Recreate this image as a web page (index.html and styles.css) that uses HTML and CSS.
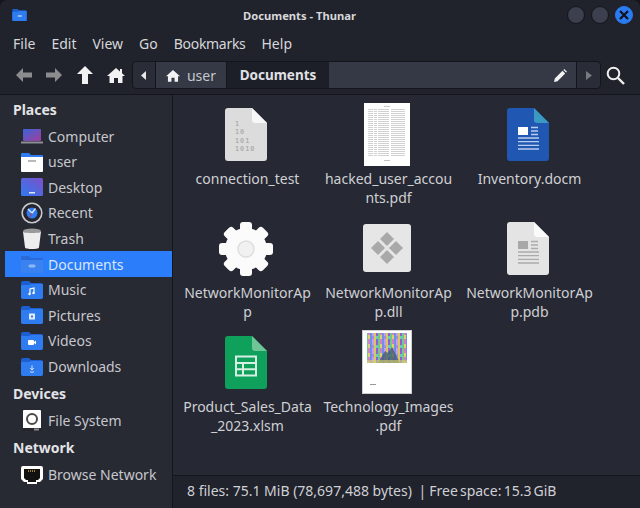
FILE: index.html
```html
<!DOCTYPE html>
<html lang="en">
<head>
  <meta charset="UTF-8">
  <title>Documents - Thunar</title>
  <link rel="stylesheet" href="styles.css">
</head>
<body>

<svg class="defs" width="0" height="0">
  <defs>
    <symbol id="folder" viewBox="0 0 22 18">
      <path d="M0 2a2 2 0 0 1 2-2h6l2 2h10a2 2 0 0 1 2 2v12a2 2 0 0 1-2 2H2a2 2 0 0 1-2-2z" fill="#1c5fd0"/>
      <path d="M0 5a1 1 0 0 1 1-1h7l2-1h11a1 1 0 0 1 1 1v12a2 2 0 0 1-2 2H2a2 2 0 0 1-2-2z" fill="#2f7bf0"/>
    </symbol>
    <symbol id="doc-sheet" viewBox="0 0 42 53">
      <path d="M3 0h24l15 15v35a3 3 0 0 1-3 3H3a3 3 0 0 1-3-3V3a3 3 0 0 1 3-3z"/>
    </symbol>
  </defs>
</svg>

<div class="window">
  <header class="titlebar">
    <svg class="app-icon" width="15" height="12" viewBox="0 0 22 18"><use href="#folder"/><rect x="8" y="9" width="7" height="3" rx="1.5" fill="#8fb8f5"/></svg>
    <div class="title">Documents - Thunar</div>
    <div class="win-buttons">
      <span class="win-btn"></span>
      <span class="win-btn"></span>
      <span class="win-btn close">
        <svg width="10" height="10" viewBox="0 0 10 10"><path d="M1 1l8 8M9 1l-8 8" stroke="#10131a" stroke-width="2.2"/></svg>
      </span>
    </div>
  </header>

  <nav class="menubar">
    <span>File</span><span>Edit</span><span>View</span><span>Go</span><span class="tight">Bookmarks</span><span>Help</span>
  </nav>

  <div class="toolbar">
    <svg class="tool" width="18" height="16" viewBox="0 0 18 16"><path d="M8 1L1 8l7 7v-4.500h9v-5H8z" fill="#8b8c90"/></svg>
    <svg class="tool" width="18" height="16" viewBox="0 0 18 16"><path d="M10 1l7 7-7 7v-4.500H1v-5h9z" fill="#8b8c90"/></svg>
    <svg class="tool up" width="16" height="18" viewBox="0 0 16 18"><path d="M8 0l8 8h-5v10H5V8H0z" fill="#f2f2f2"/></svg>
    <svg class="tool home" width="18" height="16" viewBox="0 0 18 16"><path d="M9 1l4 3.500V2h2v4.300L18 9h-2.500v7H11v-5H7v5H2.500V9H0z" fill="#f2f2f2"/></svg>

    <div class="pathbar">
      <div class="seg arrow-seg"><svg width="6" height="9" viewBox="0 0 6 9"><path d="M5 0v9L0 4.500z" fill="#e8e8e8"/></svg></div>
      <div class="seg user-seg">
        <svg width="14" height="13" viewBox="0 0 18 16"><path d="M9 1l9 8h-2.500v7H11v-5H7v5H2.500V9H0z" fill="#f2f2f2"/></svg>
        <span>user</span>
      </div>
      <div class="seg current-seg">Documents</div>
      <div class="seg entry-seg">
        <svg width="13" height="13" viewBox="0 0 13 13"><path d="M0 13l.8-3.500L8.500 1.800l2.700 2.700-7.700 7.700zM9.400.9l.9-.9 2.700 2.700-.9.900z" fill="#f2f2f2"/></svg>
      </div>
      <div class="seg arrow-seg end"><svg width="6" height="9" viewBox="0 0 6 9"><path d="M0 0v9l6-4.500z" fill="#777983"/></svg></div>
    </div>

    <svg class="search" width="19" height="19" viewBox="0 0 19 19"><circle cx="7.500" cy="7.500" r="5.800" fill="none" stroke="#f0f0f0" stroke-width="2"/><path d="M12 12l6 6" stroke="#f0f0f0" stroke-width="2.400"/></svg>
  </div>

  <div class="main">
    <aside class="sidebar">
      <h3>Places</h3>
      <div class="place">
        <svg width="22" height="18" viewBox="0 0 22 18"><defs><linearGradient id="lap" x1="0" y1="0" x2="1" y2="1"><stop offset="0" stop-color="#3b63d8"/><stop offset="1" stop-color="#a13f9c"/></linearGradient></defs><rect x="2" y="2" width="18" height="12" rx="1" fill="url(#lap)"/><rect x="0" y="14.500" width="22" height="2" fill="#8d8f96"/></svg>
        Computer
      </div>
      <div class="place">
        <svg width="22" height="20" viewBox="0 0 22 20"><path d="M0 2a1 1 0 0 1 1-1h7l2 2h11a1 1 0 0 1 1 1v3H0z" fill="#2f7bf0"/><path d="M0 5h22v14a1 1 0 0 1-1 1H1a1 1 0 0 1-1-1z" fill="#fff"/><rect x="7" y="8" width="8" height="2" fill="#b9b9b9"/></svg>
        user
      </div>
      <div class="place">
        <svg width="22" height="18" viewBox="0 0 22 18"><defs><linearGradient id="desk" x1="0" y1="1" x2="1" y2="0"><stop offset="0" stop-color="#2f7bf0"/><stop offset="1" stop-color="#7d50c9"/></linearGradient></defs><rect width="22" height="18" rx="1.500" fill="url(#desk)"/><rect x="8" y="14" width="6" height="1.500" fill="#dfe6f8"/></svg>
        Desktop
      </div>
      <div class="place">
        <svg width="22" height="22" viewBox="0 0 22 22"><circle cx="11" cy="11" r="9.800" fill="#23252f" stroke="#c9c9cc" stroke-width="1.600"/><circle cx="11" cy="11" r="5.500" fill="#2f7bf0"/><path d="M7 7l4 4 3.500-4.500" fill="none" stroke="#dfe9fb" stroke-width="1.300"/><path d="M11 11l-3 5" stroke="#c03a4a"/></svg>
        Recent
      </div>
      <div class="place">
        <svg width="20" height="22" viewBox="0 0 20 22"><ellipse cx="10" cy="3" rx="9" ry="2.500" fill="#9a9a9a"/><path d="M1 3.500c2 2 16 2 18 0l-2 16c-.3 2-13.700 2-14 0z" fill="#ededed"/></svg>
        Trash
      </div>
      <div class="place selected">
        <svg width="22" height="18" viewBox="0 0 22 18"><path d="M0 2a1 1 0 0 1 1-1h7l2 2h11a1 1 0 0 1 1 1v13a1 1 0 0 1-1 1H1a1 1 0 0 1-1-1z" fill="#2a6ad8"/><path d="M0 5h22v12a1 1 0 0 1-1 1H1a1 1 0 0 1-1-1z" fill="#3a82f0"/><rect x="7.500" y="9.500" width="7" height="3" rx="1.500" fill="#8fb8f5"/></svg>
        Documents
      </div>
      <div class="place">
        <svg width="22" height="18" viewBox="0 0 22 18"><use href="#folder"/><path d="M9 13V8l4-1v5" fill="none" stroke="#fff" stroke-width="1.200"/><circle cx="8.500" cy="13" r="1.200" fill="#fff"/><circle cx="12.500" cy="12" r="1.200" fill="#fff"/></svg>
        Music
      </div>
      <div class="place">
        <svg width="22" height="18" viewBox="0 0 22 18"><use href="#folder"/><rect x="8" y="7.500" width="6" height="6" fill="#e4ecfb"/><rect x="10" y="9.500" width="2" height="2" fill="#2f7bf0"/></svg>
        Pictures
      </div>
      <div class="place">
        <svg width="22" height="18" viewBox="0 0 22 18"><use href="#folder"/><rect x="7" y="8" width="6" height="5" rx="1" fill="#fff"/><path d="M13 10l2-1.500v4L13 11z" fill="#fff"/></svg>
        Videos
      </div>
      <div class="place">
        <svg width="22" height="18" viewBox="0 0 22 18"><use href="#folder"/><path d="M11 7.500v4M9.300 10l1.700 2 1.700-2M9 14h4" fill="none" stroke="#d8e5fb" stroke-width="1"/></svg>
        Downloads
      </div>
      <h3>Devices</h3>
      <div class="place">
        <svg width="18" height="21" viewBox="0 0 18 21"><rect width="18" height="19" rx="1" fill="#fff"/><rect y="18" width="18" height="3" fill="#24262c"/><rect x="11" y="18.500" width="5" height="2" fill="#8a8a8a"/><circle cx="9" cy="9" r="5" fill="none" stroke="#4a4a4a" stroke-width="2"/></svg>
        File System
      </div>
      <h3>Network</h3>
      <div class="place">
        <svg width="22" height="18" viewBox="0 0 22 18"><path d="M2 0h18a2 2 0 0 1 2 2v11l-3 3h-3v2H6v-2H3l-3-3V2a2 2 0 0 1 2-2z" fill="#fff"/><path d="M3 3h16v9l-2 2h-2v2H7v-2H5l-2-2z" fill="#111"/><path d="M7 5h8" stroke="#c9a53a" stroke-width="1.500" stroke-dasharray="1 1"/></svg>
        Browse Network
      </div>
    </aside>

    <section class="content">
      <div class="grid">
        <div class="file">
          <div class="thumb">
            <svg width="42" height="53" viewBox="0 0 42 53">
              <use href="#doc-sheet" fill="#dcdcdc"/>
              <path d="M27 0l15 15H30a3 3 0 0 1-3-3z" fill="#f7f7f7"/>
              <text class="bin" x="10" y="18">1</text>
              <text class="bin" x="10" y="26">10</text>
              <text class="bin" x="10" y="35">101</text>
              <text class="bin" x="10" y="43">1010</text>
            </svg>
          </div>
          <div class="name">connection_test</div>
        </div>
        <div class="file">
          <div class="thumb">
            <svg width="46" height="63" viewBox="0 0 46 63">
              <defs>
                <pattern id="rows" width="46" height="2" patternUnits="userSpaceOnUse"><rect width="46" height="1" fill="#9a9a9a"/></pattern>
              </defs>
              <rect width="46" height="63" fill="#fff"/>
              <g opacity=".45">
                <rect x="4" y="6" width="5" height="48" fill="url(#rows)"/>
                <rect x="10" y="6" width="3" height="48" fill="url(#rows)"/>
                <rect x="14" y="6" width="11" height="48" fill="url(#rows)"/>
                <rect x="27" y="6" width="14" height="48" fill="url(#rows)"/>
                <rect x="20" y="57" width="6" height="1" fill="#777"/>
                <rect x="20" y="3" width="6" height="1" fill="#888"/>
              </g>
            </svg>
          </div>
          <div class="name">hacked_user_accou<br>nts.pdf</div>
        </div>
        <div class="file">
          <div class="thumb">
            <svg width="42" height="53" viewBox="0 0 42 53">
              <use href="#doc-sheet" fill="#2057b3"/>
              <path d="M27 0l15 15H30a3 3 0 0 1-3-3z" fill="#3a9ac4"/>
              <rect x="11" y="19" width="10" height="8" fill="#fff"/>
              <path d="M24 19.500h7M24 23h7M24 26.500h7M11 30h21M11 33.700h21M11 37.400h21M11 41h21" stroke="#b9cdf0" stroke-width="1.300"/>
            </svg>
          </div>
          <div class="name">Inventory.docm</div>
        </div>

        <div class="file">
          <div class="thumb">
            <svg class="gear" width="54" height="54" viewBox="-27 -27 54 54">
              <g fill="#fbfbfb">
                <circle r="21"/>
                <rect x="-6" y="-27" width="12" height="12" rx="3"/>
                <rect x="-6" y="-27" width="12" height="12" rx="3" transform="rotate(45)"/>
                <rect x="-6" y="-27" width="12" height="12" rx="3" transform="rotate(90)"/>
                <rect x="-6" y="-27" width="12" height="12" rx="3" transform="rotate(135)"/>
                <rect x="-6" y="-27" width="12" height="12" rx="3" transform="rotate(180)"/>
                <rect x="-6" y="-27" width="12" height="12" rx="3" transform="rotate(225)"/>
                <rect x="-6" y="-27" width="12" height="12" rx="3" transform="rotate(270)"/>
                <rect x="-6" y="-27" width="12" height="12" rx="3" transform="rotate(315)"/>
              </g>
              <circle r="8" fill="#f1f1f1" stroke="#dedede" stroke-width="1.500"/>
            </svg>
          </div>
          <div class="name">NetworkMonitorAp<br>p</div>
        </div>
        <div class="file">
          <div class="thumb">
            <svg width="48" height="48" viewBox="0 0 48 48">
              <rect width="48" height="48" rx="3" fill="#e6e6e6"/>
              <g fill="#a9a9a9">
                <path d="M24 8l7 7-7 7-7-7z"/>
                <path d="M24 26l7 7-7 7-7-7z"/>
                <path d="M15 17l7 7-7 7-7-7z"/>
                <path d="M33 17l7 7-7 7-7-7z"/>
              </g>
            </svg>
          </div>
          <div class="name">NetworkMonitorAp<br>p.dll</div>
        </div>
        <div class="file">
          <div class="thumb">
            <svg width="42" height="53" viewBox="0 0 42 53">
              <use href="#doc-sheet" fill="#e4e4e4"/>
              <path d="M27 0l15 15H30a3 3 0 0 1-3-3z" fill="#fafafa"/>
              <rect x="11" y="19" width="10" height="8" fill="#a8a8a8"/>
              <path d="M24 19.500h7M24 23h7M24 26.500h7M11 30h21M11 33.700h21M11 37.400h21M11 41h21" stroke="#ababab" stroke-width="1.300"/>
            </svg>
          </div>
          <div class="name">NetworkMonitorAp<br>p.pdb</div>
        </div>

        <div class="file">
          <div class="thumb">
            <svg width="42" height="53" viewBox="0 0 42 53">
              <use href="#doc-sheet" fill="#0fa05c"/>
              <path d="M27 0l15 15H30a3 3 0 0 1-3-3z" fill="#6fc498"/>
              <path d="M11 20.500h20v19H11zM11 27h20M11 33.300h20M18 27v12.500" fill="none" stroke="#d8f0e3" stroke-width="2"/>
            </svg>
          </div>
          <div class="name">Product_Sales_Data<br>_2023.xlsm</div>
        </div>
        <div class="file">
          <div class="thumb">
            <svg width="50" height="64" viewBox="0 0 50 64">
              <defs>
                <pattern id="noise" width="12" height="9" patternUnits="userSpaceOnUse">
                  <rect width="12" height="9" fill="#a78be0"/>
                  <rect x="0" width="2" height="9" fill="#d9c65c"/>
                  <rect x="2" width="2" height="6" fill="#8e5fd8"/>
                  <rect x="4" width="2" height="9" fill="#70c98a"/>
                  <rect x="6" width="2" height="5" fill="#d77fc0"/>
                  <rect x="8" width="2" height="9" fill="#6f8fe8"/>
                  <rect x="10" width="2" height="6" fill="#c0a0e8"/>
                  <rect x="2" y="6" width="2" height="3" fill="#66d0c0"/>
                  <rect x="6" y="5" width="2" height="4" fill="#e0d070"/>
                </pattern>
              </defs>
              <rect width="50" height="64" fill="#fff"/>
              <rect x=".5" y=".5" width="49" height="63" fill="none" stroke="#cfcfcf"/>
              <rect x="5" y="3" width="40" height="30" fill="url(#noise)"/>
              <path d="M16 33l7-12 3 2 4-6 8 16z" fill="#3f5a6e" opacity=".75"/>
              <rect x="5" y="30" width="40" height="3" fill="#d8d46a" opacity=".6"/>
              <rect x="8" y="54" width="6" height="1" fill="#999"/>
            </svg>
          </div>
          <div class="name">Technology_Images<br>.pdf</div>
        </div>
      </div>
      <footer class="status">8 files: 75.1 MiB (78,697,488 bytes) <span class="sep">|</span> <span class="free">Free space: 15.3 GiB</span></footer>
    </section>
  </div>
</div>

</body>
</html>
```

FILE: styles.css
```css
html, body {
  margin: 0;
  height: 100%;
  background: #15151b;
}
body {
  font-family: "Noto Sans", sans-serif;
  font-size: 14px;
  color: #d3d4d8;
  overflow: hidden;
}
.defs {
  display: block;
  height: 0;
}
.window {
  width: 640px;
  height: 508px;
  display: flex;
  flex-direction: column;
  background: #20222c;
  border-radius: 7px 7px 0 0;
  overflow: hidden;
}
.titlebar {
  height: 30px;
  flex: none;
  display: grid;
  grid-template-columns: 231px auto 1fr;
  align-items: center;
  padding: 0 7px 0 12px;
}
.app-icon {
  display: block;
}
.title {
  font-size: 11.2px;
  font-weight: 700;
  color: #d8d8da;
}
.win-buttons {
  display: flex;
  justify-content: flex-end;
  align-items: center;
  gap: 6px;
}
.win-btn {
  width: 16px;
  height: 16px;
  border-radius: 50%;
  background: #3c3f4d;
  border: 1px solid #14161c;
  display: flex;
  align-items: center;
  justify-content: center;
}
.win-btn.close {
  background: #2b7bf2;
  border-color: #2b7bf2;
}
.menubar {
  height: 26px;
  flex: none;
  display: flex;
  align-items: center;
  gap: 16px;
  padding: 0 13px;
  color: #d6d7da;
}
.tight {
  letter-spacing: -.3px;
}
.toolbar {
  height: 39px;
  flex: none;
  box-sizing: border-box;
  display: flex;
  align-items: center;
  padding: 5px 8px 5px 15px;
  border-bottom: 1px solid #14161c;
}
.tool {
  flex: none;
  margin-right: 12px;
}
.tool.up {
  margin: 0 14px 0 2px;
}
.tool.home {
  margin-right: 7px;
}
.pathbar {
  flex: 1;
  height: 28px;
  box-sizing: border-box;
  display: flex;
  border: 1px solid #14161c;
  border-radius: 4px;
  background: #2a2c38;
  overflow: hidden;
}
.seg {
  box-sizing: border-box;
  display: flex;
  align-items: center;
  justify-content: center;
  border-right: 1px solid #14161c;
}
.arrow-seg {
  width: 23px;
  flex: none;
}
.arrow-seg.end {
  border-right: 0;
}
.user-seg {
  width: 71px;
  gap: 7px;
  background: #353845;
  color: #c6c7cc;
}
.current-seg {
  width: 102px;
  background: #1d1f28;
  border-right: 0;
  font-size: 13.5px;
  font-weight: 700;
  color: #e0e1e4;
}
.entry-seg {
  flex: 1;
  justify-content: flex-end;
  padding-right: 9px;
  background: #353845;
}
.search {
  flex: none;
  margin-left: 5px;
  margin-right: 7px;
}
.main {
  flex: 1;
  min-height: 0;
  display: flex;
}
.sidebar {
  width: 173px;
  flex: none;
  box-sizing: border-box;
  padding: 0 0 0 5px;
  background: #272933;
  border-right: 1px solid #14161c;
}
.sidebar h3 {
  margin: 0;
  height: 28.4px;
  line-height: 30.4px;
  padding-left: 8px;
  font-size: 14px;
  font-weight: 700;
  color: #e2e3e6;
}
.place {
  height: 25.6px;
  display: flex;
  align-items: center;
  gap: 5px;
  padding-left: 16px;
  color: #c6c7cb;
}
.place svg {
  width: 22px;
  flex: none;
}
.place.selected {
  background: #2b7dfa;
  color: #d8e6fe;
}
.content {
  flex: 1;
  min-width: 0;
  display: flex;
  flex-direction: column;
  background: #262833;
}
.grid {
  flex: 1;
  display: grid;
  grid-template-columns: repeat(3, 141px);
  grid-auto-rows: 114px;
  padding: 7px 0 0 4px;
}
.file {
  display: flex;
  flex-direction: column;
  align-items: center;
}
.thumb {
  height: 64px;
  margin-right: 4px;
  display: flex;
  align-items: center;
  justify-content: center;
}
.thumb svg {
  display: block;
}
.gear {
  margin-top: 2px;
}
.name {
  margin-top: 3px;
  line-height: 19px;
  text-align: center;
  white-space: nowrap;
  color: #cfd0d4;
}
.bin {
  font-family: "DejaVu Sans Mono", monospace;
  font-size: 6.800px;
  font-weight: 700;
  letter-spacing: 1px;
  fill: #b0b0b0;
}
.status {
  height: 33px;
  flex: none;
  box-sizing: border-box;
  display: flex;
  align-items: center;
  padding: 0 0 3px 14px;
  background: #20222c;
  border-top: 1px solid #14161c;
  color: #cfd0d4;
  white-space: pre;
}
.sep {
  margin: 0 3px;
}
.free {
  word-spacing: -1.500px;
}
```
